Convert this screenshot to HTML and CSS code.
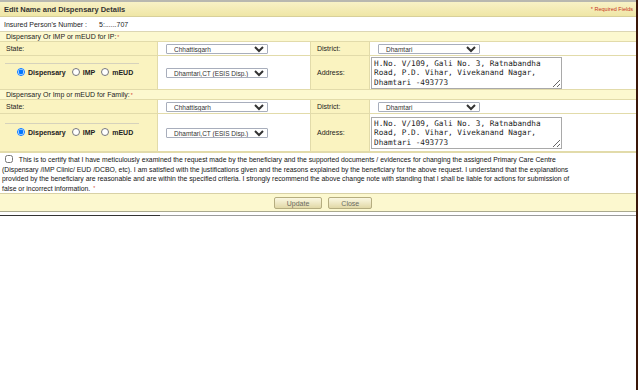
FILE: index.html
```html
<!DOCTYPE html>
<html lang="en">

<head>
    <meta charset="UTF-8">
    <meta name="viewport" content="width=device-width, initial-scale=1.0">
    <title>Edit Name and Dispensary Details</title>
    <link rel="stylesheet" href="styles.css">
</head>

<body>
    <div class="frame">
        <div class="panel">
            <div class="panel-head">
                <span class="title">Edit Name and Dispensary Details</span>
                <span class="req">* Required Fields</span>
            </div>
            <div class="ip-row">Insured Person's Number : <span class="ip-no">5:......707</span></div>

            <!-- IP -->
            <div class="sec-title">Dispensary Or IMP or mEUD for IP:<span class="star">*</span></div>
            <div class="grid">
                <div class="lbl">State:</div>
                <div class="fld">
                    <select class="sel"><option>Chhattisgarh</option></select>
                </div>
                <div class="lbl">District:</div>
                <div class="fld">
                    <select class="sel"><option>Dhamtari</option></select>
                </div>

                <div class="lbl radio-cell">
                    <div class="radio-box">
                        <label><input type="radio" name="ip" checked> Dispensary</label>
                        <label><input type="radio" name="ip"> IMP</label>
                        <label><input type="radio" name="ip"> mEUD</label>
                    </div>
                </div>
                <div class="fld mid">
                    <select class="sel"><option>Dhamtari,CT (ESIS Disp.)</option></select>
                </div>
                <div class="lbl mid">Address:</div>
                <div class="fld">
                    <textarea class="addr">H.No. V/109, Gali No. 3, Ratnabandha Road, P.D. Vihar, Vivekanand Nagar, Dhamtari -493773</textarea>
                </div>
            </div>

            <!-- Family -->
            <div class="sec-title">Dispensary Or Imp or mEUD for Family:<span class="star">*</span></div>
            <div class="grid family">
                <div class="lbl">State:</div>
                <div class="fld">
                    <select class="sel"><option>Chhattisgarh</option></select>
                </div>
                <div class="lbl">District:</div>
                <div class="fld">
                    <select class="sel"><option>Dhamtari</option></select>
                </div>

                <div class="lbl radio-cell">
                    <div class="radio-box">
                        <label><input type="radio" name="fam" checked> Dispensary</label>
                        <label><input type="radio" name="fam"> IMP</label>
                        <label><input type="radio" name="fam"> mEUD</label>
                    </div>
                </div>
                <div class="fld mid">
                    <select class="sel"><option>Dhamtari,CT (ESIS Disp.)</option></select>
                </div>
                <div class="lbl mid">Address:</div>
                <div class="fld">
                    <textarea class="addr">H.No. V/109, Gali No. 3, Ratnabandha Road, P.D. Vihar, Vivekanand Nagar, Dhamtari -493773</textarea>
                </div>
            </div>

            <div class="certify">
                <input type="checkbox" class="chk"> This is to certify that I have meticulously examined the request made by the beneficiary and the supported documents / evidences for changing the assigned Primary Care Centre<br>
                (Dispensary /IMP Clinic/ EUD /DCBO, etc). I am satisfied with the justifications given and the reasons explained by the beneficiary for the above request. I understand that the explanations<br>
                provided by the beneficiary are reasonable and are within the specified criteria. I strongly recommend the above change note with standing that I shall be liable for actions for submission of<br>
                false or incorrect information. <span class="star">*</span>
            </div>

            <div class="actions">
                <input type="button" class="btn" value="Update">
                <input type="button" class="btn" value="Close">
            </div>
            <div class="foot"></div>
        </div>
    </div>
</body>

</html>
```

FILE: styles.css
```css
* {
    box-sizing: border-box;
}
body {
    margin: 0;
    font-family: "Liberation Sans", Arial, sans-serif;
    font-size: 7px;
    color: #1c1c1c;
    background: #fff;
}
.frame {
    width: 638px;
    min-height: 390px;
    border-right: 2px solid #3a1608;
}
.panel {
    border-top: 2px solid #b8b8b0;
}
.panel-head {
    height: 15px;
    padding: 0 3px 0 4px;
    display: flex;
    justify-content: space-between;
    align-items: center;
    background: linear-gradient(#f8f2c6, #efe6a6);
    border-bottom: 1px solid #d8d09a;
}
.title {
    font-size: 7.5px;
    font-weight: bold;
    color: #333;
}
.req {
    font-size: 5.5px;
    color: #c8321e;
}
.star {
    color: #d23a2a;
    font-size: 5px;
    vertical-align: top;
    margin-left: 1px;
}
.ip-row {
    height: 15px;
    padding: 0 4px;
    display: flex;
    align-items: center;
    border-bottom: 1px solid #dcd6b4;
}
.ip-no {
    margin-left: 12px;
}
.sec-title {
    height: 9px;
    padding-left: 6px;
    display: flex;
    align-items: center;
    background: #fcf8cf;
}
.grid {
    display: grid;
    grid-template-columns: 157px 152px 58px 1fr;
    grid-template-rows: 13px 33px;
    gap: 1px;
    padding: 1px 0;
    background: #e2dbaa;
}
.grid.family {
    grid-template-rows: 13px 37px;
}
.lbl {
    background: #faf3c0;
    padding-left: 6px;
    display: flex;
    align-items: center;
}
.fld {
    background: #fff;
    padding-left: 8px;
    display: flex;
    align-items: center;
}
.sel {
    width: 102px;
    height: 10px;
    padding: 0 0 0 3px;
    font-family: inherit;
    font-size: 6.5px;
    color: #333;
    border: 1px solid #a8aebc;
    border-radius: 1px;
    background: #fff;
}
.radio-cell {
    padding: 0 18px 0 5px;
}
.radio-box {
    flex: 1;
    border-top: 1px solid #d6d2bc;
    padding: 4px 0 6px 12px;
    display: flex;
    gap: 6px;
    font-weight: bold;
    color: #222;
}
.radio-box label {
    display: flex;
    align-items: center;
    gap: 3px;
}
.radio-box input {
    width: 8px;
    height: 8px;
    margin: 0;
}
.addr {
    width: 191px;
    height: 32px;
    margin-left: -7px;
    padding: 1px 2px;
    font-family: "DejaVu Sans Mono", "Liberation Mono", monospace;
    font-size: 7.7px;
    line-height: 9.8px;
    color: #222;
    border: 1px solid #a9a9a9;
    resize: both;
}
.certify {
    border-top: 1px solid #e2dbaa;
    padding: 2px 2px 2px;
    font-size: 6.85px;
    line-height: 9.7px;
    height: 41px;
    color: #141414;
}
.chk {
    width: 8px;
    height: 8px;
    margin: 0 4px 0 3px;
    vertical-align: -1px;
}
.actions {
    height: 19px;
    display: flex;
    justify-content: center;
    align-items: center;
    gap: 6px;
    padding: 1px 0 0 10px;
    background: #fcf8cf;
    border-top: 1px solid #d8d1a6;
    border-bottom: 1px solid #aaa98e;
}
.btn {
    height: 12px;
    padding: 0 12px;
    font-family: inherit;
    font-size: 7px;
    color: #6a6a60;
    background: linear-gradient(#fbf8e2, #e1d8a6);
    border: 1px solid #b5ad80;
    border-radius: 2px;
    cursor: pointer;
}
.foot {
    height: 4px;
    background: linear-gradient(to right, #333 160px, #9a9a9a 160px) bottom / 100% 1px no-repeat;
}
```
